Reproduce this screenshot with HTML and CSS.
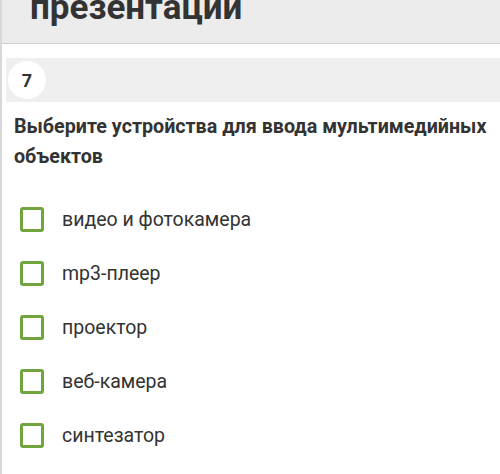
FILE: index.html
```html
<!DOCTYPE html>
<html lang="ru">

<head>
    <meta charset="UTF-8">
    <meta name="viewport" content="width=device-width, initial-scale=1.0">
    <title>Тест</title>

    <!-- Styles -->
    <link rel="stylesheet" href="styles.css">
</head>
<body>
    <div class="page">

        <header class="title-bar">
            <h1>презентации</h1>
        </header>

        <main class="question">
            <div class="number-bar">
                <span class="number">7</span>
            </div>

            <p class="question-text">Выберите устройства для ввода мультимедийных объектов</p>

            <ul class="options">
                <li class="option"><span class="checkbox"></span>видео и фотокамера</li>
                <li class="option"><span class="checkbox"></span>mp3-плеер</li>
                <li class="option"><span class="checkbox"></span>проектор</li>
                <li class="option"><span class="checkbox"></span>веб-камера</li>
                <li class="option"><span class="checkbox"></span>синтезатор</li>
            </ul>
        </main>

    </div>
</body>
</html>
```

FILE: styles.css
```css
:root {
    --text-color: #333;
    --band-color: #efefef;
    --green: #70a53e;
}

* {
    box-sizing: border-box;
    margin: 0;
    padding: 0;
}

body {
    font-family: Roboto, "Noto Sans", sans-serif;
    color: var(--text-color);
    background-color: #fff;
}

.page {
    min-height: 474px;
    border-left: 2px solid #d8d8d8;
    overflow: hidden;
}

.title-bar {
    height: 44px;
    background-color: #ececec;
    border-bottom: 1px solid #cfcfcf;
    overflow: hidden;
}

.title-bar h1 {
    margin-top: -10px;
    padding-left: 28px;
    font-size: 35px;
    line-height: 36px;
    font-weight: bold;
}

.question {
    margin-top: 14px;
}

.number-bar {
    display: flex;
    align-items: center;
    height: 44px;
    margin-left: 4px;
    background-color: var(--band-color);
}

.number {
    display: flex;
    align-items: center;
    justify-content: center;
    width: 38px;
    height: 38px;
    margin-left: 2px;
    border-radius: 50%;
    background-color: #fff;
    font-size: 18px;
    font-weight: bold;
}

.question-text {
    margin-top: 10px;
    padding: 0 8px 0 12px;
    font-size: 19.7px;
    line-height: 30px;
    font-weight: bold;
}

.options {
    list-style: none;
    margin-top: 20px;
}

.option {
    display: flex;
    align-items: center;
    height: 54px;
    padding-left: 18px;
    font-size: 19.5px;
}

.checkbox {
    width: 24px;
    height: 25px;
    margin-right: 18px;
    border: 3px solid var(--green);
    border-radius: 3px;
}
```
